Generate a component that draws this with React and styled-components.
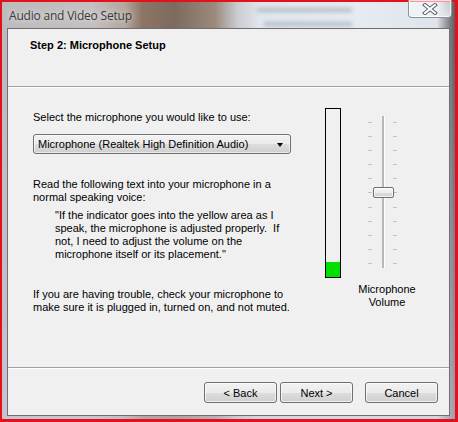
import React from "react";
import styled, { createGlobalStyle } from "styled-components";

const GlobalStyle = createGlobalStyle`
  html, body { margin: 0; padding: 0; }
  body {
    width: 458px;
    height: 422px;
    overflow: hidden;
    background: #e3121a;
    font-family: "Liberation Sans", Arial, sans-serif;
  }
  * { box-sizing: border-box; }
`;

const Page = styled.div`
  width: 458px;
  height: 422px;
  padding: 2px 3px 3px 2px;
  background: #e3121a;
`;

const Window = styled.div`
  position: relative;
  width: 100%;
  height: 100%;
  display: flex;
  flex-direction: column;
  padding: 0 5px 3px 5px;
  background:
    linear-gradient(180deg, rgba(255,255,255,0.0) 0%, rgba(255,255,255,0.0) 10%, rgba(205,200,222,0.6) 100%),
    linear-gradient(90deg,
      #bdbabd 0%, #c4bfc0 20%, #b3a79f 27%, #8d7565 31%, #7d6a5e 38%,
      #9b8a7c 47%, #c9ccd0 52%, #e2e7ee 57%, #e6ebf1 80%, #dfe4ea 96%, #8a8a90 98.5%, #5a5a60 100%);
`;

const TitleBar = styled.div`
  height: 26px;
  display: flex;
  align-items: center;
  justify-content: space-between;
  padding-left: 2px;
`;

const TitleText = styled.span`
  font-family: "Open Sans", "Noto Sans", sans-serif;
  font-size: 12px;
  color: #3a3a3a;
  text-shadow: 0 0 6px rgba(255,255,255,0.9);
  letter-spacing: -0.2px;
  margin-top: 0px;
`;

const BlurText = styled.div`
  position: absolute;
  top: ${(p) => p.$top}px;
  left: ${(p) => p.$left}px;
  width: ${(p) => p.$w}px;
  height: 4px;
  background: rgba(90, 100, 120, 0.35);
  filter: blur(2px);
`;

const CloseButton = styled.div`
  align-self: flex-start;
  margin-top: -2px;
  margin-right: -2px;
  width: 44px;
  height: 18px;
  border: 1px solid #8c929c;
  border-top: none;
  border-radius: 0 0 4px 4px;
  background: linear-gradient(180deg, rgba(255,255,255,0.55), rgba(240,243,247,0.8));
  box-shadow: inset 0 0 0 1px rgba(255,255,255,0.7);
  display: flex;
  align-items: center;
  justify-content: center;
`;

const Client = styled.div`
  flex: 1;
  display: flex;
  flex-direction: column;
  background: #f0f0f0;
  border: 1px solid #6f6f74;
`;

const Header = styled.div`
  height: 58px;
  padding: 10px 22px 0 22px;
  border-bottom: 1px solid #a0a0a0;
  box-shadow: 0 1px 0 #ffffff;
`;

const HeaderTitle = styled.div`
  font-size: 11px;
  font-weight: bold;
  line-height: 13px;
  color: #000;
`;

const Body = styled.div`
  flex: 1;
  display: flex;
  padding-left: 25px;
`;

const LeftCol = styled.div`
  width: 270px;
  padding-top: 24px;
  display: flex;
  flex-direction: column;
`;

const Text = styled.p`
  margin: ${(p) => p.$mt || 0}px 0 0 ${(p) => p.$indent || 0}px;
  font-size: 11px;
  line-height: 13px;
  color: #000;
  white-space: nowrap;
`;

const Select = styled.div`
  margin-top: 10px;
  width: 258px;
  height: 20px;
  border: 1px solid #707070;
  border-radius: 3px;
  background: linear-gradient(180deg, #f2f2f2 0%, #ebebeb 50%, #dddddd 51%, #cfcfcf 100%);
  box-shadow: inset 0 0 0 1px rgba(255,255,255,0.6);
  display: flex;
  align-items: center;
  justify-content: space-between;
  padding: 0 7px 0 4px;
  font-size: 11px;
  color: #000;
`;

const Arrow = styled.span`
  width: 0;
  height: 0;
  border-left: 3.5px solid transparent;
  border-right: 3.5px solid transparent;
  border-top: 4px solid #000;
  margin-top: 1px;
`;

const MeterArea = styled.div`
  margin-left: 22px;
  margin-top: 21px;
`;

const Meter = styled.div`
  width: 16px;
  height: 170px;
  border: 1px solid #000;
  background: #f0f0f0;
  display: flex;
  flex-direction: column;
  justify-content: flex-end;
`;

const MeterFill = styled.div`
  background: #00e000;
`;

const SliderCol = styled.div`
  margin-left: 16px;
  margin-top: 29px;
  width: 60px;
  display: flex;
  flex-direction: column;
`;

const SliderRow = styled.div`
  position: relative;
  margin-left: 11px;
  height: 152px;
  display: flex;
`;

const TickCol = styled.div`
  width: 4px;
  padding: 6px 0 4px 0;
  display: flex;
  flex-direction: column;
  justify-content: space-between;
`;

const Tick = styled.span`
  display: block;
  height: 1px;
  background: #c4c4c4;
`;

const Track = styled.div`
  width: 3px;
  margin: 0 ${(p) => p.$mr}px 0 ${(p) => p.$ml}px;
  background: #b8b8b8;
  border-right: 1px solid #ffffff;
`;

const Thumb = styled.div`
  position: absolute;
  left: 5px;
  top: 71px;
  width: 21px;
  height: 11px;
  border: 1px solid #707070;
  border-radius: 2px;
  background: linear-gradient(180deg, #f6f6f6 0%, #ececec 50%, #dcdcdc 51%, #d2d2d2 100%);
  box-shadow: inset 0 0 0 1px rgba(255,255,255,0.7);
`;

const SliderLabel = styled.div`
  margin-top: 15px;
  text-align: center;
  font-size: 11px;
  line-height: 13px;
  color: #000;
`;

const Footer = styled.div`
  height: 48px;
  border-top: 1px solid #a0a0a0;
  box-shadow: inset 0 1px 0 #ffffff;
  display: flex;
  justify-content: flex-end;
  align-items: flex-start;
  padding: 14px 11px 0 0;
`;

const Button = styled.button`
  width: 73px;
  height: 21px;
  margin-left: ${(p) => p.$ml || 0}px;
  border: 1px solid #707070;
  border-radius: 3px;
  background: linear-gradient(180deg, #f2f2f2 0%, #ebebeb 50%, #dddddd 51%, #cfcfcf 100%);
  box-shadow: inset 0 0 0 1px rgba(255,255,255,0.65);
  font-family: "Liberation Sans", Arial, sans-serif;
  font-size: 11px;
  color: #000;
  padding: 0;
`;

const CloseGlyph = () => (
  <svg width="16" height="12" viewBox="0 0 16 12">
    <path d="M3 2 L13 10 M13 2 L3 10" stroke="#5a5f68" strokeWidth="4" strokeLinecap="square" />
    <path d="M3 2 L13 10 M13 2 L3 10" stroke="#ffffff" strokeWidth="2" strokeLinecap="square" />
  </svg>
);

export default function App() {
  const level = 15;
  return (
    <>
      <GlobalStyle />
      <Page>
        <Window>
          <BlurText $top={6} $left={255} $w={95} />
          <BlurText $top={20} $left={262} $w={88} />
          <TitleBar>
            <TitleText>Audio and Video Setup</TitleText>
            <CloseButton>
              <CloseGlyph />
            </CloseButton>
          </TitleBar>
          <Client>
            <Header>
              <HeaderTitle>Step 2: Microphone Setup</HeaderTitle>
            </Header>
            <Body>
              <LeftCol>
                <Text>Select the microphone you would like to use:</Text>
                <Select>
                  <span>Microphone (Realtek High Definition Audio)</span>
                  <Arrow />
                </Select>
                <Text $mt={24}>
                  Read the following text into your microphone in a
                  <br />
                  normal speaking voice:
                </Text>
                <Text $mt={5} $indent={22}>
                  "If the indicator goes into the yellow area as I
                  <br />
                  speak, the microphone is adjusted properly.&nbsp; If
                  <br />
                  not, I need to adjust the volume on the
                  <br />
                  microphone itself or its placement."
                </Text>
                <Text $mt={27}>
                  If you are having trouble, check your microphone to
                  <br />
                  make sure it is plugged in, turned on, and not muted.
                </Text>
              </LeftCol>
              <MeterArea>
                <Meter>
                  <MeterFill style={{ height: `${level}px` }} />
                </Meter>
              </MeterArea>
              <SliderCol>
                <SliderRow>
                  <TickCol>
                    {Array.from({ length: 11 }).map((_, i) => (
                      <Tick key={i} />
                    ))}
                  </TickCol>
                  <Track $ml={10} $mr={8} />
                  <TickCol>
                    {Array.from({ length: 11 }).map((_, i) => (
                      <Tick key={i} />
                    ))}
                  </TickCol>
                  <Thumb />
                </SliderRow>
                <SliderLabel>
                  Microphone
                  <br />
                  Volume
                </SliderLabel>
              </SliderCol>
            </Body>
            <Footer>
              <Button>&lt; Back</Button>
              <Button $ml={3}>Next &gt;</Button>
              <Button $ml={12}>Cancel</Button>
            </Footer>
          </Client>
        </Window>
      </Page>
    </>
  );
}
